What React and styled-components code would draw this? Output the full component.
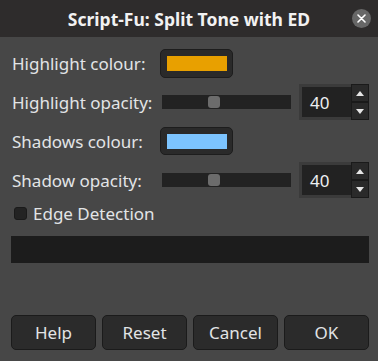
import React from "react";
import styled, { createGlobalStyle } from "styled-components";

const Global = createGlobalStyle`
  html, body { margin: 0; padding: 0; background: #474747; }
  body { font-family: "Noto Sans", "Open Sans", sans-serif; }
  * { box-sizing: border-box; }
`;

const Window = styled.div`
  width: 378px;
  height: 361px;
  background: #474747;
  display: flex;
  flex-direction: column;
  color: #e2e4e6;
  overflow: hidden;
`;

const TitleBar = styled.div`
  height: 37px;
  flex: none;
  background: #2e2c2c;
  display: flex;
  align-items: center;
  justify-content: center;
  position: relative;
  font-weight: 700;
  font-size: 17.5px;
  color: #f2f2f2;
`;

const CloseButton = styled.div`
  position: absolute;
  right: 7px;
  top: 9px;
  width: 19px;
  height: 19px;
  border-radius: 50%;
  background: #676767;
  display: flex;
  align-items: center;
  justify-content: center;
`;

const Body = styled.div`
  flex: 1;
  display: flex;
  flex-direction: column;
  padding: 12px 9px 11px 11px;
`;

const Row = styled.div`
  display: flex;
  align-items: center;
  height: ${(p) => p.$h}px;
  margin-bottom: ${(p) => p.$mb || 0}px;
`;

const Label = styled.div`
  width: 149px;
  padding-left: 1px;
  font-size: 17px;
  flex: none;
  white-space: nowrap;
`;

const ColorButton = styled.div`
  width: 73px;
  height: 100%;
  border-radius: 5px;
  background: #2a2a2a;
  border: 1px solid #1d1d1d;
  display: flex;
  align-items: center;
  justify-content: center;
`;

const Swatch = styled.div`
  width: 60px;
  height: 15px;
  background: ${(p) => p.$c};
`;

const Trough = styled.div`
  margin-left: 2px;
  width: 129px;
  height: 14px;
  background: #222222;
  position: relative;
`;

const Knob = styled.div`
  position: absolute;
  top: 1px;
  left: 46px;
  width: 12px;
  height: 12px;
  border-radius: 3px;
  background: #6c6c6c;
`;

const Spin = styled.div`
  margin-left: 8px;
  width: 70px;
  height: 100%;
  background: #3b3b3b;
  display: flex;
  padding: 3px 0 3px 3px;
`;

const SpinEntry = styled.div`
  flex: 1;
  background: #222222;
  font-size: 17px;
  color: #eef0f2;
  display: flex;
  align-items: center;
  padding-left: 8px;
`;

const SpinButtons = styled.div`
  width: 18px;
  margin: -3px 0;
  display: flex;
  flex-direction: column;
`;

const SpinBtn = styled.div`
  flex: 1;
  background: #2a2a2a;
  border: 1px solid #1a1a1a;
  display: flex;
  align-items: center;
  justify-content: center;
`;

const CheckRow = styled.div`
  display: flex;
  align-items: center;
  height: 22px;
  margin-top: 4px;
  padding-left: 3px;
  font-size: 17px;
`;

const CheckBox = styled.div`
  width: 13px;
  height: 13px;
  border-radius: 3px;
  background: #232323;
  border: 1px solid #1a1a1a;
  margin-right: 6px;
`;

const Progress = styled.div`
  margin-top: 12px;
  height: 27px;
  background: #1c1c1c;
`;

const ButtonBar = styled.div`
  margin-top: auto;
  display: grid;
  grid-template-columns: repeat(4, 1fr);
  gap: 6px;
  height: 35px;
`;

const Button = styled.div`
  background: #2b2b2b;
  border: 1px solid #1b1b1b;
  border-radius: 5px;
  display: flex;
  align-items: center;
  justify-content: center;
  font-size: 17px;
`;

const Up = () => (
  <svg width="8" height="5" viewBox="0 0 8 5"><path d="M0 5 L4 0 L8 5 Z" fill="#e6e6e6" /></svg>
);
const Down = () => (
  <svg width="8" height="5" viewBox="0 0 8 5"><path d="M0 0 L4 5 L8 0 Z" fill="#e6e6e6" /></svg>
);

const SpinBox = ({ value }) => (
  <Spin>
    <SpinEntry>{value}</SpinEntry>
    <SpinButtons>
      <SpinBtn><Up /></SpinBtn>
      <SpinBtn><Down /></SpinBtn>
    </SpinButtons>
  </Spin>
);

export default function App() {
  return (
    <Window>
      <Global />
      <TitleBar>
        Script-Fu: Split Tone with ED
        <CloseButton>
          <svg width="9" height="9" viewBox="0 0 9 9">
            <path d="M1 1 L8 8 M8 1 L1 8" stroke="#ffffff" strokeWidth="1.6" strokeLinecap="round" />
          </svg>
        </CloseButton>
      </TitleBar>
      <Body>
        <Row $h={29} $mb={6}>
          <Label>Highlight colour:</Label>
          <ColorButton><Swatch $c="#e8a000" /></ColorButton>
        </Row>
        <Row $h={36} $mb={7}>
          <Label>Highlight opacity:</Label>
          <Trough><Knob /></Trough>
          <SpinBox value="40" />
        </Row>
        <Row $h={28} $mb={7}>
          <Label>Shadows colour:</Label>
          <ColorButton><Swatch $c="#7cc4ff" /></ColorButton>
        </Row>
        <Row $h={36}>
          <Label>Shadow opacity:</Label>
          <Trough><Knob /></Trough>
          <SpinBox value="40" />
        </Row>
        <CheckRow>
          <CheckBox />
          Edge Detection
        </CheckRow>
        <Progress />
        <ButtonBar>
          <Button>Help</Button>
          <Button>Reset</Button>
          <Button>Cancel</Button>
          <Button>OK</Button>
        </ButtonBar>
      </Body>
    </Window>
  );
}
